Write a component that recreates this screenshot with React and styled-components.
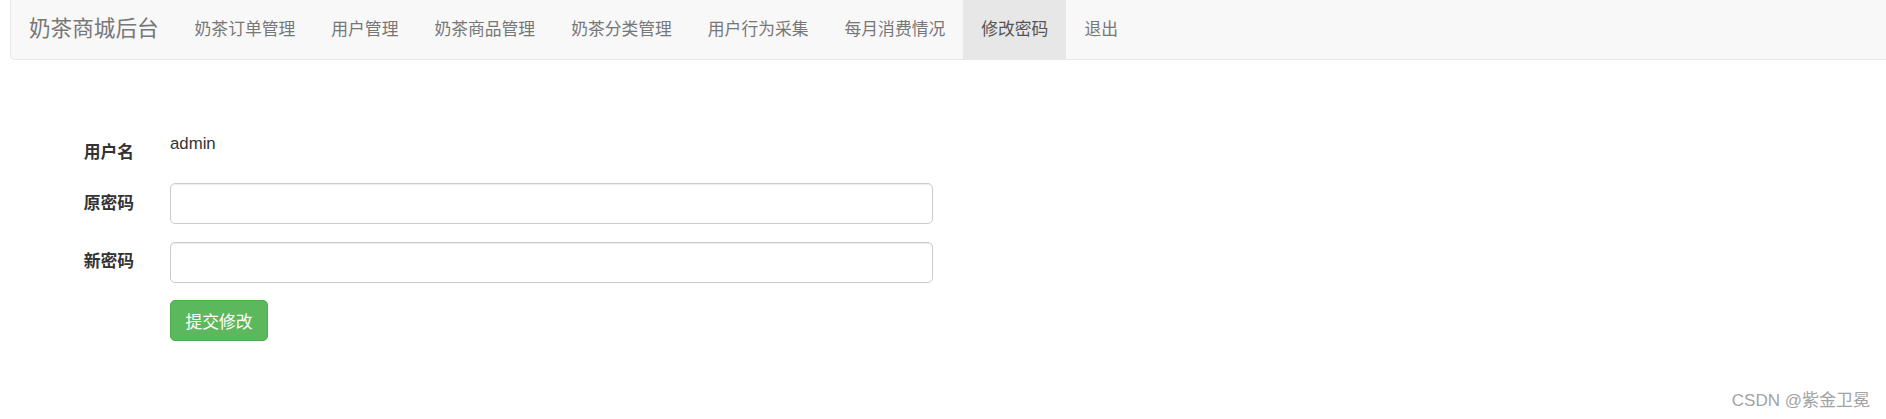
import React from "react";
import styled, { createGlobalStyle } from "styled-components";

const GlobalStyle = createGlobalStyle`
  html, body {
    margin: 0;
    padding: 0;
    height: 100%;
    background: #fff;
  }
  body {
    font-family: "Liberation Sans", "Noto Sans CJK SC", sans-serif;
    font-size: 16.8px;
    line-height: 1.42857;
    color: #333;
    overflow: hidden;
  }
  #root {
    position: relative;
    height: 100%;
  }
`;

const Navbar = styled.nav`
  display: flex;
  align-items: stretch;
  height: 59px;
  margin-left: 10px;
  background: #f8f8f8;
  border-left: 1px solid #e7e7e7;
  border-bottom: 1px solid #e7e7e7;
  border-bottom-left-radius: 5px;
  font-family: "Liberation Sans", "Noto Sans CJK SC", sans-serif;
`;

const Brand = styled.a`
  display: flex;
  align-items: center;
  padding: 0 18px;
  font-size: 21.6px;
  color: #777;
  text-decoration: none;
  white-space: nowrap;
`;

const NavList = styled.ul`
  display: flex;
  margin: 0;
  padding: 0;
  list-style: none;
`;

const NavItem = styled.li`
  display: flex;
  align-items: center;
  padding: 0 18px;
  font-size: 16.8px;
  white-space: nowrap;
  color: ${({ active }) => (active ? "#555" : "#777")};
  background: ${({ active }) => (active ? "#e7e7e7" : "transparent")};
  cursor: pointer;
`;

const Form = styled.form`
  margin-top: 71px;
  display: flex;
  flex-direction: column;
  gap: 17.8px;
`;

const Row = styled.div`
  display: grid;
  grid-template-columns: 152px 763px;
  column-gap: 18px;
  min-height: ${({ plain }) => (plain ? "34px" : "auto")};
`;

const Label = styled.label`
  padding: ${({ low }) => (low ? "10.4px" : "8.4px")} 18px 0 0;
  text-align: right;
  font-weight: bold;
  font-size: 16.8px;
  line-height: 24px;
  color: #333;
  font-family: "Liberation Sans", "Noto Sans CJK SC", sans-serif;
`;

const Value = styled.div`
  padding-top: 1px;
  font-size: 16.8px;
  line-height: 24px;
  color: #333;
`;

const Input = styled.input`
  box-sizing: border-box;
  width: 763px;
  height: 40.8px;
  padding: 7px 14px;
  border: 1px solid #ccc;
  border-radius: 5px;
  background: #fff;
  box-shadow: inset 0 1px 1px rgba(0, 0, 0, 0.075);
  font-size: 16.8px;
  outline: none;
`;

const SubmitButton = styled.button`
  box-sizing: border-box;
  width: 98px;
  height: 41px;
  padding: 0;
  border: 1px solid #4cae4c;
  border-radius: 5px;
  background: #5cb85c;
  color: #fff;
  font-size: 16.8px;
  font-family: "Liberation Sans", "Noto Sans CJK SC", sans-serif;
  cursor: pointer;
`;

const Watermark = styled.div`
  position: absolute;
  right: 16px;
  top: 389px;
  font-size: 17px;
  line-height: 24px;
  color: #a3a3a3;
  font-family: "Liberation Sans", "Noto Sans CJK SC", sans-serif;
  white-space: nowrap;
`;

const navItems = [
  "奶茶订单管理",
  "用户管理",
  "奶茶商品管理",
  "奶茶分类管理",
  "用户行为采集",
  "每月消费情况",
  "修改密码",
  "退出",
];

export default function App() {
  return (
    <>
      <GlobalStyle />
      <Navbar>
        <Brand href="#">奶茶商城后台</Brand>
        <NavList>
          {navItems.map((item) => (
            <NavItem key={item} active={item === "修改密码"}>
              {item}
            </NavItem>
          ))}
        </NavList>
      </Navbar>
      <Form onSubmit={(e) => e.preventDefault()}>
        <Row plain>
          <Label low>用户名</Label>
          <Value>admin</Value>
        </Row>
        <Row>
          <Label>原密码</Label>
          <Input type="password" />
        </Row>
        <Row>
          <Label>新密码</Label>
          <Input type="password" />
        </Row>
        <Row>
          <span />
          <div>
            <SubmitButton type="submit">提交修改</SubmitButton>
          </div>
        </Row>
      </Form>
      <Watermark>CSDN @紫金卫冕</Watermark>
    </>
  );
}
